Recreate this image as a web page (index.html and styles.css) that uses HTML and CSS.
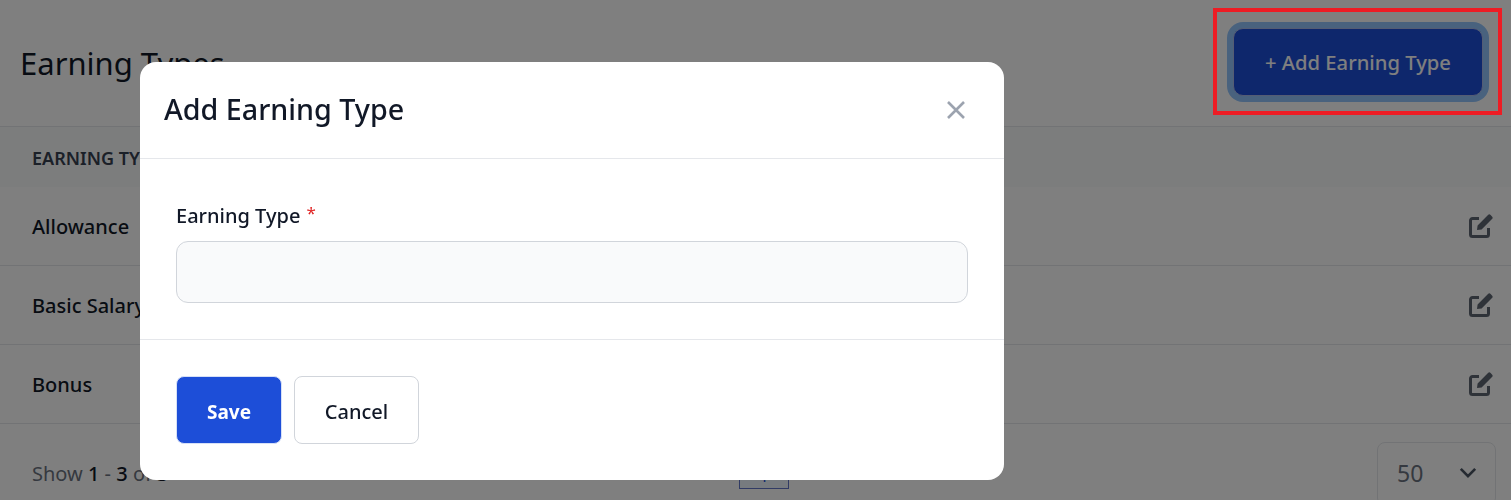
FILE: index.html
```html
<!DOCTYPE html>
<html lang="en">
<head>
  <meta charset="UTF-8" />
  <meta name="viewport" content="width=device-width, initial-scale=1.0" />
  <title>Earning Types</title>
  <link rel="stylesheet" href="styles.css">
</head>
<body>
  <div class="page">
    <header class="page-head">
      <h1>Earning Types</h1>
      <button class="add-btn">+ Add Earning Type</button>
    </header>

    <div class="table-head">EARNING TYPE</div>
    <div class="row">
      <span>Allowance</span>
      <svg class="edit-icon" viewBox="0 0 24 24"><path d="M19.5 14v6.5a2 2 0 0 1-2 2h-14a2 2 0 0 1-2-2v-14a2 2 0 0 1 2-2H10" fill="none" stroke="currentColor" stroke-width="3"/><path d="M8 16l.6-4.6L19 1a1.8 1.8 0 0 1 2.6 0L23 2.4a1.8 1.8 0 0 1 0 2.6L12.6 15.4z" fill="currentColor"/></svg>
    </div>
    <div class="row">
      <span>Basic Salary</span>
      <svg class="edit-icon" viewBox="0 0 24 24"><path d="M19.5 14v6.5a2 2 0 0 1-2 2h-14a2 2 0 0 1-2-2v-14a2 2 0 0 1 2-2H10" fill="none" stroke="currentColor" stroke-width="3"/><path d="M8 16l.6-4.6L19 1a1.8 1.8 0 0 1 2.6 0L23 2.4a1.8 1.8 0 0 1 0 2.6L12.6 15.4z" fill="currentColor"/></svg>
    </div>
    <div class="row">
      <span>Bonus</span>
      <svg class="edit-icon" viewBox="0 0 24 24"><path d="M19.5 14v6.5a2 2 0 0 1-2 2h-14a2 2 0 0 1-2-2v-14a2 2 0 0 1 2-2H10" fill="none" stroke="currentColor" stroke-width="3"/><path d="M8 16l.6-4.6L19 1a1.8 1.8 0 0 1 2.6 0L23 2.4a1.8 1.8 0 0 1 0 2.6L12.6 15.4z" fill="currentColor"/></svg>
    </div>

    <footer class="table-foot">
      <span class="count">Show <b>1</b> - <b>3</b> of <b>3</b></span>
      <span class="page-num">1</span>
      <div class="page-size">
        <span>50</span>
        <svg class="chevron" viewBox="0 0 20 12"><path d="M2 2l8 8 8-8" fill="none" stroke="currentColor" stroke-width="3"/></svg>
      </div>
    </footer>
  </div>

  <div class="overlay"></div>

  <div class="modal">
    <div class="modal-head">
      <h2>Add Earning Type</h2>
      <svg class="close-icon" viewBox="0 0 20 20"><path d="M2 2l16 16M18 2L2 18" fill="none" stroke="currentColor" stroke-width="2.6"/></svg>
    </div>
    <div class="modal-body">
      <label for="earningType">Earning Type <span class="req">*</span></label>
      <input type="text" id="earningType">
    </div>
    <div class="modal-foot">
      <button class="btn-save">Save</button>
      <button class="btn-cancel">Cancel</button>
    </div>
  </div>

  <div class="highlight"></div>
</body>
</html>
```

FILE: styles.css
```css
:root {
  --primary: #1d4ed8;
  --text: #111827;
  --border: #e5e7eb;
}

* {
  box-sizing: border-box;
}

html, body {
  height: 500px;
  overflow: hidden;
}

body {
  margin: 0;
  font-family: "Noto Sans", "Open Sans", sans-serif;
  background-color: #fff;
  color: var(--text);
}

.page-head {
  height: 127px;
  padding: 28px 28px 0 20px;
  display: flex;
  justify-content: space-between;
  align-items: flex-start;
  border-bottom: 1px solid var(--border);
}

h1 {
  margin: 11px 0 0;
  font-size: 31px;
  line-height: 48px;
  font-weight: 400;
}

.add-btn {
  width: 250px;
  height: 68px;
  padding-top: 1px;
  border: 1px solid #a9b8e8;
  border-radius: 10px;
  background-color: var(--primary);
  box-shadow: 0 0 0 6px #93c5fd;
  color: #fff;
  font-family: inherit;
  font-size: 20.2px;
  font-weight: 500;
}

.table-head {
  height: 59px;
  padding: 2px 32px 0;
  display: flex;
  align-items: center;
  background-color: #f9fafb;
  font-size: 18px;
  font-weight: 600;
  color: #374151;
}

.row {
  height: 79px;
  padding: 0 18px 0 32px;
  display: flex;
  justify-content: space-between;
  align-items: center;
  border-top: 1px solid var(--border);
  font-size: 20px;
  font-weight: 500;
}

/* first row sits flush under the grey head, no line */
.table-head + .row {
  border-top-color: #f9fafb;
}

.edit-icon {
  width: 24px;
  height: 24px;
  color: #5f6673;
}

.table-foot {
  height: 80px;
  padding: 18px 15px 0 32px;
  display: grid;
  grid-template-columns: 1fr 50px 1fr;
  align-items: start;
  border-top: 1px solid var(--border);
}

.count {
  margin-top: 18px;
  font-size: 20px;
  color: #6b7280;
}

.count b {
  font-weight: 500;
  color: var(--text);
}

.page-num {
  margin-top: 21px;
  height: 26px;
  border: 1px solid #6377c9;
  background-color: #eff6ff;
  color: var(--primary);
  text-align: center;
  font-size: 16px;
  line-height: 24px;
}

.page-size {
  justify-self: end;
  width: 119px;
  height: 64px;
  padding: 14px 18px 0 19px;
  display: flex;
  justify-content: space-between;
  align-items: flex-start;
  border: 1px solid var(--border);
  border-radius: 8px;
  font-size: 23px;
  color: #6b7280;
}

.chevron {
  width: 18px;
  height: 11px;
  margin-top: 10px;
  color: #4b5563;
}

.overlay {
  position: fixed;
  inset: 0;
  background-color: rgba(0, 0, 0, 0.5);
}

.modal {
  position: absolute;
  left: 140px;
  top: 62px;
  width: 864px;
  height: 418px;
  border-radius: 16px;
  background-color: #fff;
}

.modal-head {
  height: 97px;
  padding: 0 38px 4px 24px;
  display: flex;
  justify-content: space-between;
  align-items: center;
  border-bottom: 1px solid var(--border);
}

h2 {
  margin: 0;
  font-size: 28.7px;
  font-weight: 500;
  color: var(--text);
}

.close-icon {
  width: 20px;
  height: 20px;
  margin-top: 4px;
  color: #9ca3af;
}

.modal-body {
  height: 181px;
  padding: 43px 36px 0;
  border-bottom: 1px solid var(--border);
}

label {
  display: block;
  margin-bottom: 10px;
  font-size: 20px;
  line-height: 28px;
  font-weight: 500;
}

.req {
  position: relative;
  top: -4px;
  margin-left: 1px;
  color: #e02424;
  font-size: 17px;
  font-weight: 400;
}

input {
  display: block;
  width: 100%;
  height: 62px;
  border: 1px solid #d1d5db;
  border-radius: 12px;
  background-color: #f9fafb;
}

.modal-foot {
  padding: 36px 36px 0;
  display: flex;
  gap: 12px;
}

.btn-save,
.btn-cancel {
  height: 68px;
  padding-top: 4px;
  border-radius: 8px;
  font-family: inherit;
  font-size: 20px;
}

.btn-save {
  width: 106px;
  border: 1px solid #d6e0f7;
  background-color: var(--primary);
  color: #fff;
  font-size: 19px;
  font-weight: 700;
}

.btn-cancel {
  width: 125px;
  border: 1px solid #d1d5db;
  background-color: #fff;
  color: var(--text);
  font-weight: 500;
}

.highlight {
  position: absolute;
  left: 1213px;
  top: 8px;
  width: 289px;
  height: 107px;
  border: 4px solid #ed1c24;
}
```
